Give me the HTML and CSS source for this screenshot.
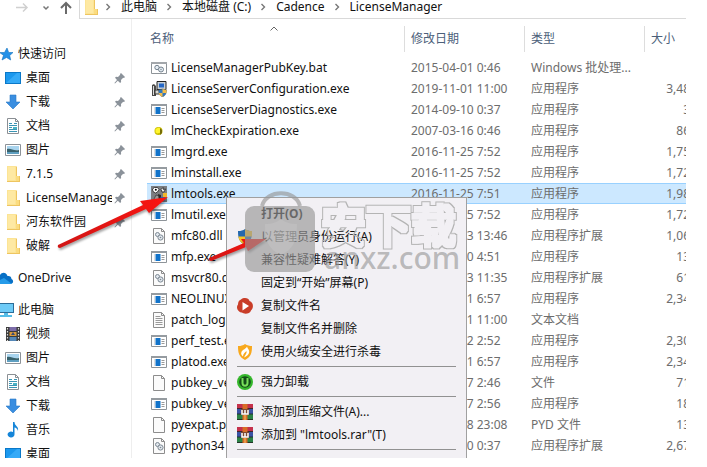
FILE: index.html
```html
<!DOCTYPE html>
<html lang="zh-CN">
<head>
<meta charset="utf-8">
<title>LicenseManager</title>
<link rel="stylesheet" href="styles.css">
</head>
<body>
<svg class="defs" aria-hidden="true">
  <defs>
    <symbol id="folder" viewBox="0 0 16 16"><path d="M2 0h9l1 1v9h3v6H2z" fill="#eec560"/><path d="M2 0h9v15H2z" fill="#fce495"/><path d="M11 10h3v5h-3z" fill="#fbdc7f"/><path d="M3 1h7v13H3z" fill="#fee9a3"/></symbol>
    <symbol id="pin" viewBox="0 0 12 12"><path d="M7 1l4 4-1 1-.8-.2L7 8l.1 2-1 1L3.800 8.700 1 11.500l-.6-.6L3 7.900 1 5.800l1-1 2 .1 2.200-2.200L6 2z" fill="#8b929a"/></symbol>
    <symbol id="desktop" viewBox="0 0 16 16"><path d="M0 2h16v12H0z" fill="#0a78c8"/><path d="M1 3h14v10H1z" fill="#1b98ee"/><path d="M1 13L12 3h3v10z" fill="#35aaf7"/></symbol>
    <symbol id="down" viewBox="0 0 16 16"><path d="M5 1h6v7h4l-7 7-7-7h4z" fill="#3a8ee0" stroke="#2878c8" stroke-width=".6"/></symbol>
    <symbol id="doc" viewBox="0 0 16 16"><path d="M2.500.5h8l3 3v12h-11z" fill="#fff" stroke="#8a8f94"/><path d="M10.500.5v3h3" fill="none" stroke="#8a8f94"/><path d="M4 5.500h3M4 7.500h8M4 9.500h3M9 5.500h3M4 11.500h8M4 13.500h8" stroke="#3a95b4"/><path d="M8 9h4v2H8z" fill="#49b3c4"/></symbol>
    <symbol id="picture" viewBox="0 0 16 16"><path d="M.5 2.500h15v11H.5z" fill="#fff" stroke="#8c9298"/><path d="M2 4h12v4H2z" fill="#a9d4ee"/><path d="M2 7c4-1 6 2 12 1v4H2z" fill="#38626d"/><path d="M2 10h12v2H2z" fill="#5f9fc0"/></symbol>
    <symbol id="film" viewBox="0 0 16 16"><path d="M1 1h14v14H1z" fill="#3a3a3a"/><path d="M4.500 1h7v4h-7z" fill="#7c6ca8"/><path d="M4.500 6h7v4h-7z" fill="#d99a3c"/><path d="M4.500 11h7v4h-7z" fill="#5588b8"/><path d="M6 9l2-3 2 3z" fill="#394c78"/><path d="M2.500 2v13M13.500 2v13" stroke="#ddd" stroke-width="1.200" stroke-dasharray="1.500 1.500"/></symbol>
    <symbol id="music" viewBox="0 0 16 16"><path d="M8 0h1.500c0 4 4.500 4 3.500 9-.6-2.500-2-3.200-3.500-3.500V12a3.500 3 0 1 1-1.500-2z" fill="#1585d8"/></symbol>
    <symbol id="app" viewBox="0 0 16 16"><path d="M.5 2.500h15v11H.5z" fill="#fff" stroke="#8e9499"/><path d="M0 2h16v2H0z" fill="#959ba0"/><path d="M3 5h1v7H3z" fill="#ddd"/><path d="M4.500 5h5v7h-5z" fill="#1173ca"/><path d="M10.500 6.500h3M10.500 8.500h3M10.500 10.500h3" stroke="#999"/></symbol>
    <symbol id="bat" viewBox="0 0 16 16"><path d="M.5 2.500h15v11H.5z" fill="#fff" stroke="#8e9499"/><path d="M0 2h16v2H0z" fill="#a3a7ab"/><g fill="#e6edf3" stroke="#75838f"><circle cx="6" cy="7.500" r="2.200"/><circle cx="10" cy="9.500" r="2.500"/></g><circle cx="10" cy="9.500" r=".7" fill="#75838f"/></symbol>
    <symbol id="page" viewBox="0 0 16 16"><path d="M2.500.5h8l3 3v12h-11z" fill="#fbfbfb" stroke="#8d8d8d"/><path d="M10.500.5v3h3" fill="none" stroke="#8d8d8d"/></symbol>
    <symbol id="text" viewBox="0 0 16 16"><use href="#page"/><path d="M4.500 4.500h5M4.500 6.500h7M4.500 8.500h7M4.500 10.500h7M4.500 12.500h7" stroke="#999"/></symbol>
    <symbol id="dll" viewBox="0 0 16 16"><use href="#page"/><g fill="#e2e8ee" stroke="#7d8994"><circle cx="6.500" cy="6.500" r="2"/><circle cx="9.500" cy="9.500" r="2.600"/></g><circle cx="9.500" cy="9.500" r=".8" fill="#7d8994"/></symbol>
    <symbol id="installer" viewBox="0 0 16 16"><path d="M6 .5h9v8H6z" fill="#c8d0d6" stroke="#222"/><path d="M8 2.500h5v4H8z" fill="#2468c8"/><path d="M1 4l2-1 2 2v10H1z" fill="#4a4a48"/><path d="M2.500 5v9" stroke="#ddd"/><path d="M4 9h7v4H4z" fill="#d8d8d0" stroke="#333"/><path d="M7.500 9l4-1 4 1c0 3.500-1 5.500-4 7-3-1.500-4-3.500-4-7z" fill="#2f78c0" stroke="#555" stroke-width=".5"/><path d="M11.500 8l4 1v3h-4zM7.700 12h3.800v4c-2-1-3.300-2-3.800-4z" fill="#f3bc4a"/></symbol>
    <symbol id="check" viewBox="0 0 16 16"><circle cx="7.500" cy="8" r="4" fill="#c9bc00"/><path d="M4.500 6l3-1.500 2 1v4l-3 1-2-1z" fill="#fff52e"/><path d="M9 5l2 2v3l-2 2z" fill="#756d08"/></symbol>
    <symbol id="tools" viewBox="0 0 16 16"><path d="M0 0h16v16H0z" fill="#7b7e82"/><path d="M1.500 3l2-1.500h3l1.500 2-1.500 2.500-2 1-2.500-1.500z" fill="#fff" stroke="#222" stroke-width=".8"/><circle cx="4.800" cy="3.800" r="1"/><path d="M10 3.500l2-2 .5 2 2-.5-1.500 3h-2z" fill="#e8e8e8" stroke="#222" stroke-width=".8"/><path d="M2 15l3-6 4 1-1 5z" fill="#999" stroke="#333" stroke-width=".7"/><path d="M7 8l3 1v6H8z" fill="#2a2a2a"/><path d="M12 7h4v4h-4z" fill="#f0b72a"/><path d="M9.500 11H14v3.500H9.500z" fill="#2868b5"/></symbol>
    <symbol id="shield" viewBox="0 0 16 16"><path d="M8 0c2 1.500 4 2 7 2 0 7-1 11-7 14C2 13 1 9 1 2c3 0 5-.5 7-2z" fill="#2568ad"/><path d="M8 0c2 1.500 4 2 7 2v5.500H8zM1.300 7.500H8V16c-4-2-6-4.500-6.700-8.500z" fill="#f6c327"/></symbol>
    <symbol id="copy" viewBox="0 0 16 16"><path d="M4 1.500c3-2.500 8-1.500 8.500 1.500 4 1 4.500 7 1.500 9.500-1 3.500-7 4-9 2C1 14.500-1.500 9 1 6.500 1 4 2 2 4 1.500z" fill="#c93d28"/><path d="M5.500 4l6.500 4-6.500 4.500z" fill="#fff"/></symbol>
    <symbol id="huorong" viewBox="0 0 16 16"><path d="M8 0c2 1.500 5 2 7 2 0 7-1 11-7 14C2 13 1 9 1 2c3 0 5-.5 7-2z" fill="#f8a81d"/><path d="M10 2.500c.5 2.500 3 3.500 2 6.500-.7 2.500-3 3.500-5 4.500 1.500-3 3-4 2.500-6.500C7.500 8.500 6 10 6 12.500 3.500 10.500 3.500 8 6 6c2-1.200 3.500-2 4-3.500z" fill="#fff"/></symbol>
    <symbol id="uninstall" viewBox="0 0 16 16"><circle cx="8" cy="8" r="8" fill="#35b72c"/><circle cx="8" cy="8" r="5.800" fill="#134d18"/><path d="M5.500 4v5c0 3.500 5 3.500 5 0V4" fill="none" stroke="#79e05b" stroke-width="2"/></symbol>
    <symbol id="rar" viewBox="0 0 16 16"><path d="M0 0h16v5H0z" fill="#c5314c"/><path d="M0 5h16v5H0z" fill="#3a53a5"/><path d="M0 10h16v6H0z" fill="#2c8246"/><path d="M0 4.500h16M0 10h16M0 15.500h16" stroke="#222" stroke-width=".8"/><path d="M5.500 0h5v16h-5z" fill="#d86d27"/><path d="M4 5h8v6H4z" fill="#7c4b35"/><path d="M5 6v4h6V6M8 6v4" fill="none" stroke="#fff" stroke-width="1.500"/><path d="M8 11v5" stroke="#f5c36b"/></symbol>
    <symbol id="blank" viewBox="0 0 16 16"><path d="M1 16c0-3 2-3 4-3 2-1.500 6-1.500 8 0 2 0 3 1 3 3z" fill="#fff"/></symbol>
    <symbol id="pc" viewBox="0 0 16 16"><path d="M0 1h14v10H0z" fill="#2c6d99"/><path d="M0 2h13v8H0z" fill="#6ecbf7"/><path d="M4 11h4v2h4v2H0v-2h4z" fill="#54bde8"/></symbol>
    <symbol id="cloud" viewBox="0 0 16 16"><path d="M0 5c2-3 6-3 7.500 1C11 6 11 7 11.500 9c2.500 1 2 5-1 5H0z" fill="#0870c5"/><path d="M0 10l4-2 8 6H0z" fill="#269be9"/></symbol>
    <symbol id="star" viewBox="0 0 16 16"><path d="M7 2l1.700 4.500L13 6.500 9.700 9.500l1 4.500L6.500 11.500 2 14l1.500-4.800L-.5 6.500h5z" fill="#2491e8" stroke="#1673bf" stroke-width=".6"/></symbol>
    <symbol id="chevron" viewBox="0 0 8 8"><path d="M2.500 1l3 3-3 3" fill="none" stroke="#777" stroke-width="1.400"/></symbol>
  </defs>
</svg>

<main class="window">
  <header class="toolbar">
    <button class="nav" aria-label="前进"><svg class="icon" viewBox="0 0 16 16"><path d="M2 7.500h11M9 3.500l4 4-4 4" fill="none" stroke="#d0d0d0" stroke-width="1.500"/></svg></button>
    <button class="nav recent" aria-label="最近"><svg class="small" viewBox="0 0 8 8"><path d="M1.500 2.500L4 5l2.500-2.500" fill="none" stroke="#777" stroke-width="1.500"/></svg></button>
    <button class="nav up" aria-label="向上"><svg class="icon" viewBox="0 0 16 16"><path d="M8 14V3M3 8l5-5 5 5" fill="none" stroke="#6a6a6a" stroke-width="2"/></svg></button>
    <nav class="address">
      <svg class="icon"><use href="#folder"/></svg>
      <svg class="small"><use href="#chevron"/></svg><a href="#">此电脑</a>
      <svg class="small"><use href="#chevron"/></svg><a href="#">本地磁盘 (C:)</a>
      <svg class="small"><use href="#chevron"/></svg><a href="#">Cadence</a>
      <svg class="small"><use href="#chevron"/></svg><a href="#">LicenseManager</a>
    </nav>
  </header>

  <div class="body">
    <aside class="sidebar">
      <a class="root" href="#"><svg class="icon"><use href="#star"/></svg><span>快速访问</span></a>
      <a href="#"><svg class="icon"><use href="#desktop"/></svg><span>桌面</span><svg class="pin"><use href="#pin"/></svg></a>
      <a href="#"><svg class="icon"><use href="#down"/></svg><span>下载</span><svg class="pin"><use href="#pin"/></svg></a>
      <a href="#"><svg class="icon"><use href="#doc"/></svg><span>文档</span><svg class="pin"><use href="#pin"/></svg></a>
      <a href="#"><svg class="icon"><use href="#picture"/></svg><span>图片</span><svg class="pin"><use href="#pin"/></svg></a>
      <a href="#"><svg class="icon"><use href="#folder"/></svg><span>7.1.5</span><svg class="pin"><use href="#pin"/></svg></a>
      <a href="#"><svg class="icon"><use href="#folder"/></svg><span>LicenseManager</span><svg class="pin"><use href="#pin"/></svg></a>
      <a href="#"><svg class="icon"><use href="#folder"/></svg><span>河东软件园</span><svg class="pin"><use href="#pin"/></svg></a>
      <a href="#"><svg class="icon"><use href="#folder"/></svg><span>破解</span></a>
      <a class="root spaced" href="#"><svg class="icon"><use href="#cloud"/></svg><span>OneDrive</span></a>
      <a class="root spaced" href="#"><svg class="icon"><use href="#pc"/></svg><span>此电脑</span></a>
      <a href="#"><svg class="icon"><use href="#film"/></svg><span>视频</span></a>
      <a href="#"><svg class="icon"><use href="#picture"/></svg><span>图片</span></a>
      <a href="#"><svg class="icon"><use href="#doc"/></svg><span>文档</span></a>
      <a href="#"><svg class="icon"><use href="#down"/></svg><span>下载</span></a>
      <a href="#"><svg class="icon"><use href="#music"/></svg><span>音乐</span></a>
      <a href="#"><svg class="icon"><use href="#desktop"/></svg><span>桌面</span></a>
    </aside>

    <section class="files">
      <table>
        <colgroup><col><col class="col-date"><col class="col-type"><col class="col-size"></colgroup>
        <thead>
          <tr>
            <th class="name"><div>名称<svg class="sort" viewBox="0 0 8 5"><path d="M.5 4.500L4 1l3.500 3.500" fill="none" stroke="#666"/></svg></div></th>
            <th><div>修改日期</div></th><th><div>类型</div></th><th><div>大小</div></th>
          </tr>
        </thead>
        <tbody>
          <tr><td><svg class="icon"><use href="#bat"/></svg>LicenseManagerPubKey.bat</td><td>2015-04-01 0:46</td><td>Windows 批处理...</td><td></td></tr>
          <tr><td><svg class="icon"><use href="#installer"/></svg>LicenseServerConfiguration.exe</td><td>2019-11-01 11:00</td><td>应用程序</td><td>3,48</td></tr>
          <tr><td><svg class="icon"><use href="#app"/></svg>LicenseServerDiagnostics.exe</td><td>2014-09-10 0:37</td><td>应用程序</td><td>3</td></tr>
          <tr><td><svg class="icon"><use href="#check"/></svg>lmCheckExpiration.exe</td><td>2007-03-16 0:46</td><td>应用程序</td><td>86</td></tr>
          <tr><td><svg class="icon"><use href="#app"/></svg>lmgrd.exe</td><td>2016-11-25 7:52</td><td>应用程序</td><td>1,75</td></tr>
          <tr><td><svg class="icon"><use href="#app"/></svg>lminstall.exe</td><td>2016-11-25 7:52</td><td>应用程序</td><td>1,72</td></tr>
          <tr class="selected"><td><svg class="icon"><use href="#tools"/></svg>lmtools.exe</td><td>2016-11-25 7:51</td><td>应用程序</td><td>1,98</td></tr>
          <tr><td><svg class="icon"><use href="#app"/></svg>lmutil.exe</td><td>2016-11-25 7:52</td><td>应用程序</td><td>1,72</td></tr>
          <tr><td><svg class="icon"><use href="#dll"/></svg>mfc80.dll</td><td>2006-12-23 13:46</td><td>应用程序扩展</td><td>1,06</td></tr>
          <tr><td><svg class="icon"><use href="#app"/></svg>mfp.exe</td><td>2014-09-10 4:51</td><td>应用程序</td><td>13</td></tr>
          <tr><td><svg class="icon"><use href="#dll"/></svg>msvcr80.dll</td><td>2006-12-23 11:35</td><td>应用程序扩展</td><td>61</td></tr>
          <tr><td><svg class="icon"><use href="#app"/></svg>NEOLINUX</td><td>2014-09-11 6:57</td><td>应用程序</td><td>2,34</td></tr>
          <tr><td><svg class="icon"><use href="#text"/></svg>patch_log</td><td>2019-11-01 11:00</td><td>文本文档</td><td></td></tr>
          <tr><td><svg class="icon"><use href="#app"/></svg>perf_test.exe</td><td>2014-09-12 2:52</td><td>应用程序</td><td>2,30</td></tr>
          <tr><td><svg class="icon"><use href="#app"/></svg>platod.exe</td><td>2014-09-11 6:57</td><td>应用程序</td><td>2,34</td></tr>
          <tr><td><svg class="icon"><use href="#page"/></svg>pubkey_ve</td><td>2014-09-17 2:46</td><td>文件</td><td>71</td></tr>
          <tr><td><svg class="icon"><use href="#app"/></svg>pubkey_ve</td><td>2014-09-17 2:56</td><td>应用程序</td><td>18</td></tr>
          <tr><td><svg class="icon"><use href="#page"/></svg>pyexpat.pyd</td><td>2014-09-18 23:08</td><td>PYD 文件</td><td>13</td></tr>
          <tr><td><svg class="icon"><use href="#dll"/></svg>python34</td><td>2014-09-10 0:37</td><td>应用程序扩展</td><td>2,67</td></tr>
        </tbody>
      </table>
    </section>
  </div>

  <div class="menu" role="menu">
    <button role="menuitem" class="default">打开(O)</button>
    <button role="menuitem"><svg class="icon"><use href="#shield"/></svg>以管理员身份运行(A)</button>
    <button role="menuitem">兼容性疑难解答(Y)</button>
    <button role="menuitem">固定到“开始”屏幕(P)</button>
    <button role="menuitem"><svg class="icon"><use href="#copy"/></svg>复制文件名</button>
    <button role="menuitem">复制文件名并删除</button>
    <button role="menuitem"><svg class="icon"><use href="#huorong"/></svg>使用火绒安全进行杀毒</button>
    <hr>
    <button role="menuitem"><svg class="icon"><use href="#uninstall"/></svg>强力卸载</button>
    <hr>
    <button role="menuitem"><svg class="icon"><use href="#rar"/></svg>添加到压缩文件(A)...</button>
    <button role="menuitem"><svg class="icon"><use href="#rar"/></svg>添加到 "lmtools.rar"(T)</button>
    <hr>
  </div>

  <svg class="overlay" width="470" height="290" viewBox="0 0 470 290">
    <defs>
      <filter id="outline" x="-10%" y="-10%" width="120%" height="120%">
        <feMorphology in="SourceGraphic" operator="dilate" radius="3" result="outer"/>
        <feMorphology in="SourceGraphic" operator="dilate" radius="2" result="inner"/>
        <feComposite in="outer" in2="inner" operator="out"/>
      </filter>
      <linearGradient id="red" x1="0" y1="0" x2="1" y2="0"><stop offset="0" stop-color="#d01616"/><stop offset="1" stop-color="#fb1410"/></linearGradient>
    </defs>
    <g class="arrows" fill="url(#red)">
      <path d="M58 245L143 205 140 201 168 197 149 213 146 209 60 248Q57 248 58 245z"/>
      <path d="M209 258L244 243 241 239 266 239 248 251 246 247 211 261Q208 261 209 258z"/>
    </g>
    <g class="watermark">
      <path d="M262 206c4-17 34-17 38 0" fill="none" stroke="#969696" stroke-width="4" stroke-opacity=".65"/>
      <rect x="245" y="206" width="70" height="66" rx="9" fill="#969696" fill-opacity=".65"/>
      <path d="M281 219c5 4 10 5 16 5 0 16-3 25-16 31-13-6-16-15-16-31 6 0 11-1 16-5z" fill="#c8c8c8" fill-opacity=".4"/>
      <text class="mark-name" x="321" y="243" filter="url(#outline)">安下载</text>
      <text class="mark-site" x="324" y="269">anxz.com</text>
    </g>
  </svg>
</main>
</body>
</html>
```
FILE: styles.css
```css
* { box-sizing: border-box; }

body {
  margin: 0;
  padding: 0 21px 9px 0;
  background: #fff;
  color: #111;
  font: 12px/20px "Noto Sans", "Noto Sans CJK SC", sans-serif;
}

a { color: inherit; text-decoration: none; }
button { border: 0; padding: 0; background: none; color: inherit; font: inherit; }
.defs { position: absolute; width: 0; height: 0; }
.icon { flex: none; width: 16px; height: 16px; }
.small { flex: none; width: 8px; height: 8px; }

.window {
  position: relative;
  height: calc(100vh - 9px);
  overflow: hidden;
}

.toolbar {
  display: flex;
  height: 19px;
  padding-left: 14px;
}
.nav { display: flex; align-items: center; width: 16px; height: 16px; }
.nav.recent { justify-content: center; margin: 0 4px 0 8px; }
.address {
  flex: 1;
  display: flex;
  align-items: center;
  height: 19px;
  margin-left: 5px;
  padding: 0 0 4px 3px;
  border: solid #d9d9d9;
  border-width: 0 0 1px 1px;
  line-height: 14px;
  white-space: nowrap;
}
.address .small { margin: 0 9px 0 8px; }
.address .icon + .small { margin-left: 5px; }

.body { display: flex; }

.sidebar {
  flex: none;
  width: 132px;
  padding-top: 23px;
  border-right: 1px solid #eee;
}
.sidebar a {
  display: flex;
  align-items: center;
  gap: 5px;
  height: 24px;
  padding: 0 5px;
  white-space: nowrap;
}
.sidebar a.root { gap: 2px; padding-left: 0; }
.sidebar .spaced { margin-top: 8px; }
.sidebar span { flex: 1; min-width: 0; overflow: hidden; }
.pin { flex: none; width: 12px; height: 12px; }
.sidebar .pin { margin-left: -3px; }

.files { flex: 1; min-width: 0; padding-left: 15px; overflow: hidden; }

table { width: calc(100% + 4px); table-layout: fixed; border-collapse: collapse; }
.col-date, .col-type { width: 120px; }
.col-size { width: 46px; }
th { height: 38px; padding: 7px 0 0; vertical-align: top; font-weight: 400; text-align: left; color: #4c607a; }
th div { position: relative; height: 26px; padding-left: 6px; border-left: 1px solid #ddd; line-height: 26px; }
th.name div { padding-left: 3px; border-left: 0; }
.sort { position: absolute; left: 123px; top: 0; width: 8px; height: 5px; }
td {
  height: 21px;
  padding: 0 0 0 7px;
  line-height: 19px;
  color: #6d6d6d;
  white-space: nowrap;
  overflow: hidden;
}
td:first-child { display: flex; align-items: center; gap: 4px; padding-left: 4px; color: #111; }
td:last-child { padding: 0; text-align: right; }
.selected { background: #cce8ff; box-shadow: inset 0 1px #99d1ff, inset 0 -1px #99d1ff; }

.menu {
  position: absolute;
  left: 226px;
  top: 197px;
  width: 241px;
  padding: 4px 0 12px;
  border: 1px solid #a0a0a0;
  background: #f2f0f4;
}
.menu button {
  display: flex;
  align-items: center;
  position: relative;
  width: 100%;
  height: 23px;
  padding-left: 34px;
  white-space: nowrap;
}
.menu .icon { margin-left: -24px; margin-right: 8px; }
.menu .default { font-weight: 700; }
.menu hr { height: 1px; margin: 3px 10px; border: 0; background: #919191; }

.overlay { position: absolute; left: 0; top: 0; pointer-events: none; }
.arrows { filter: drop-shadow(1px 2px 1px rgba(0, 0, 0, .35)); }
.mark-name { font: 400 45px "Noto Sans CJK SC", sans-serif; fill: #b4b4b4; }
.mark-site { font: 500 30px "Noto Sans", sans-serif; fill: #999; fill-opacity: .65; }
```
